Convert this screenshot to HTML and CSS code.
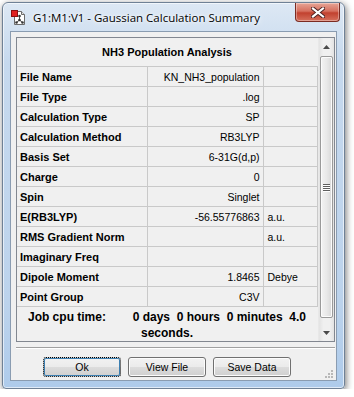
FILE: index.html
```html
<!DOCTYPE html>
<html lang="en">
<head>
  <meta charset="UTF-8">
  <title>Gaussian Calculation Summary</title>
  <link rel="stylesheet" href="styles.css">
</head>
<body>

  <div class="window">
    <div class="titlebar">
      <svg class="app-icon" width="16" height="16" viewBox="0 0 16 16">
        <path d="M3.5 1.5h7l3 3v10h-10z" fill="#fff" stroke="#6b6b6b"/>
        <path d="M10.5 1.5v3h3" fill="#e4e4e4" stroke="#6b6b6b"/>
        <rect x="0.5" y="0.5" width="6" height="6" fill="#e02020" stroke="#8a1010"/>
        <path d="M8.5 6v4M8.5 10l-3 2.5M8.5 10l3 2.5" stroke="#555" stroke-width="1"/>
        <circle cx="8.5" cy="6" r="1.3" fill="#333"/>
        <circle cx="8.5" cy="10" r="1.3" fill="#333"/>
        <circle cx="5.5" cy="12.5" r="1.3" fill="#333"/>
        <circle cx="11.5" cy="12.5" r="1.3" fill="#333"/>
      </svg>
      <span class="title">G1:M1:V1 - Gaussian Calculation Summary</span>
      <div class="close-btn">
        <svg width="14" height="11" viewBox="0 0 14 11">
          <path d="M2 1.5l10 8M12 1.5l-10 8" stroke="#4a2020" stroke-width="4" stroke-linecap="square"/>
          <path d="M2 1.5l10 8M12 1.5l-10 8" stroke="#fff" stroke-width="2.2" stroke-linecap="square"/>
        </svg>
      </div>
    </div>

    <div class="client">
      <div class="listbox">
        <table class="summary">
          <colgroup>
            <col class="col-key">
            <col class="col-val">
            <col class="col-unit">
          </colgroup>
          <tr><th colspan="3">NH3 Population Analysis</th></tr>
          <tr><td class="key">File Name</td><td class="val">KN_NH3_population</td><td class="unit"></td></tr>
          <tr><td class="key">File Type</td><td class="val">.log</td><td class="unit"></td></tr>
          <tr><td class="key">Calculation Type</td><td class="val">SP</td><td class="unit"></td></tr>
          <tr><td class="key">Calculation Method</td><td class="val">RB3LYP</td><td class="unit"></td></tr>
          <tr><td class="key">Basis Set</td><td class="val">6-31G(d,p)</td><td class="unit"></td></tr>
          <tr><td class="key">Charge</td><td class="val">0</td><td class="unit"></td></tr>
          <tr><td class="key">Spin</td><td class="val">Singlet</td><td class="unit"></td></tr>
          <tr><td class="key">E(RB3LYP)</td><td class="val">-56.55776863</td><td class="unit">a.u.</td></tr>
          <tr><td class="key">RMS Gradient Norm</td><td class="val"></td><td class="unit">a.u.</td></tr>
          <tr><td class="key">Imaginary Freq</td><td class="val"></td><td class="unit"></td></tr>
          <tr><td class="key">Dipole Moment</td><td class="val">1.8465</td><td class="unit">Debye</td></tr>
          <tr><td class="key">Point Group</td><td class="val">C3V</td><td class="unit"></td></tr>
          <tr class="cpu-row"><td colspan="3" class="cpu">Job cpu time:        0 days  0 hours  0 minutes  4.0 seconds.</td></tr>
        </table>

        <div class="scrollbar">
          <div class="sb-btn">
            <svg width="7" height="4" viewBox="0 0 7 4"><path d="M0 4h7L3.5 0z" fill="#4a4a4a"/></svg>
          </div>
          <div class="sb-track">
            <div class="sb-thumb">
              <span class="grip-line"></span>
              <span class="grip-line"></span>
              <span class="grip-line"></span>
              <span class="grip-line"></span>
            </div>
          </div>
          <div class="sb-btn">
            <svg width="7" height="4" viewBox="0 0 7 4"><path d="M0 0h7L3.5 4z" fill="#4a4a4a"/></svg>
          </div>
        </div>
      </div>

      <div class="separator"></div>

      <div class="button-row">
        <button class="btn default">Ok</button>
        <button class="btn">View File</button>
        <button class="btn">Save Data</button>
        <svg class="size-grip" width="9" height="9" viewBox="0 0 9 9">
          <g fill="#b8b8b8">
            <rect x="7" y="1" width="2" height="2"/>
            <rect x="4" y="4" width="2" height="2"/>
            <rect x="7" y="4" width="2" height="2"/>
            <rect x="1" y="7" width="2" height="2"/>
            <rect x="4" y="7" width="2" height="2"/>
            <rect x="7" y="7" width="2" height="2"/>
          </g>
        </svg>
      </div>
    </div>
  </div>

</body>
</html>
```

FILE: styles.css
```css
body {
  margin: 0;
  background-color: #ffffff;
  font-family: "Liberation Sans", Arial, sans-serif;
  color: #000;
}

.window {
  margin: 2px 0 0 2px;
  width: 343px;
  height: 387px;
  box-sizing: border-box;
  border: 1px solid #6f8196;
  border-radius: 6px 6px 4px 4px;
  background: linear-gradient(#dde8f4, #c6d9ee 60px, #bcd3ec 300px, #aecbeb);
  box-shadow: 1px 2px 7px rgba(0, 0, 0, 0.55), inset 0 0 0 1px rgba(255, 255, 255, 0.6);
  padding: 0 7px 7px 7px;
  display: flex;
  flex-direction: column;
}

.titlebar {
  height: 28px;
  display: flex;
  align-items: center;
}

.app-icon {
  margin: 2px 6px 0 1px;
}

.title {
  font-family: "Open Sans", "Noto Sans", sans-serif;
  font-size: 11.5px;
  color: #000;
  text-shadow: 0 0 6px #fff, 0 0 3px #fff;
  flex: 1;
  padding-top: 1px;
}

.close-btn {
  width: 45px;
  height: 19px;
  margin: -9px -3px 0 0;
  box-sizing: border-box;
  border: 1px solid #7b2b22;
  border-top: none;
  border-radius: 0 0 4px 4px;
  background: linear-gradient(#e7a596, #d6705f 45%, #c2412f 55%, #d5705c);
  box-shadow: inset 0 0 0 1px rgba(255, 255, 255, 0.35);
  display: flex;
  align-items: center;
  justify-content: center;
}

.client {
  flex: 1;
  background-color: #f0f0f0;
  border: 1px solid #8a9cb1;
  padding: 5px 0 0 5px;
  display: flex;
  flex-direction: column;
}

.listbox {
  width: 319px;
  height: 305px;
  box-sizing: border-box;
  border: 1px solid #828790;
  display: flex;
  background-color: #f0f0f0;
}

.summary {
  width: 300px;
  border-collapse: collapse;
  table-layout: fixed;
  align-self: flex-start;
}

.col-key {
  width: 130px;
}

.col-val {
  width: 116px;
}

.col-unit {
  width: 54px;
}

.summary th {
  height: 28px;
  padding: 0;
  font-size: 11px;
  font-weight: bold;
  text-align: center;
  border-bottom: 1px solid #c9c9c9;
}

.summary td {
  height: 19px;
  padding: 0;
  border-bottom: 1px solid #c9c9c9;
  border-right: 1px solid #c9c9c9;
  vertical-align: middle;
  white-space: nowrap;
  overflow: hidden;
}

.summary .key {
  padding-left: 3px;
  font-size: 11px;
  font-weight: bold;
}

.summary .val {
  padding-right: 3px;
  text-align: right;
  font-size: 10.5px;
}

.summary .unit {
  padding-left: 4px;
  font-size: 10.5px;
}

.summary .cpu {
  height: 34px;
  border: none;
  padding: 2px 6px 0 6px;
  vertical-align: top;
  text-align: center;
  white-space: pre-wrap;
  font-size: 12px;
  font-weight: bold;
  line-height: 16px;
}

.scrollbar {
  width: 17px;
  display: flex;
  flex-direction: column;
  background: linear-gradient(to right, #e3e3e3, #f0f0f0 30%, #f0f0f0 70%, #e3e3e3);
  border-left: 1px solid #e8e8e8;
}

.sb-btn {
  height: 17px;
  display: flex;
  align-items: center;
  justify-content: center;
}

.sb-track {
  flex: 1;
  padding: 1px 0 6px 0;
  display: flex;
}

.sb-thumb {
  flex: 1;
  margin: 0 1px;
  border: 1px solid #9a9a9a;
  border-radius: 2px;
  background: linear-gradient(to right, #f3f3f3, #e9e9e9 50%, #d8d8d8);
  box-shadow: inset 0 0 0 1px #fbfbfb;
  display: flex;
  flex-direction: column;
  align-items: center;
  justify-content: center;
  gap: 1px;
}

.grip-line {
  width: 7px;
  height: 1px;
  background-color: #5f5f5f;
  box-shadow: 0 1px 0 #fff;
}

.separator {
  width: 319px;
  margin-top: 5px;
  border-top: 1px solid #a0a0a0;
  border-bottom: 1px solid #ffffff;
}

.button-row {
  display: flex;
  align-items: flex-start;
  gap: 7px;
  padding: 8px 0 0 27px;
}

.btn {
  width: 78px;
  height: 20px;
  border: 1px solid #707070;
  border-radius: 3px;
  background: linear-gradient(#f2f2f2, #ebebeb 50%, #dddddd 50%, #cfcfcf);
  box-shadow: inset 0 0 0 1px #fcfcfc;
  font-family: "Liberation Sans", Arial, sans-serif;
  font-size: 10.5px;
  color: #000;
  padding: 0;
}

.btn.default {
  border: 1px dotted #000;
  box-shadow: inset 0 0 0 1px #3c7fb1;
}

.size-grip {
  margin: 12px 0 0 auto;
  margin-right: 3px;
}
```
